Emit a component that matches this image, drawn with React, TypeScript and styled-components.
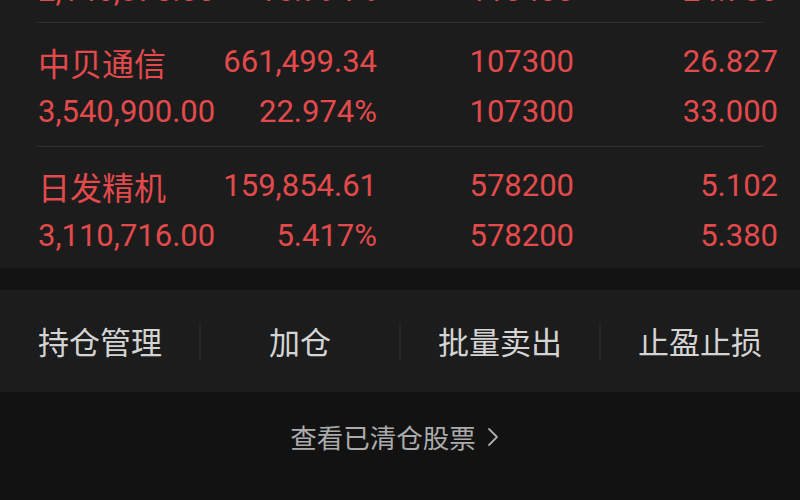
import React from "react";
import styled, { createGlobalStyle } from "styled-components";

const Global = createGlobalStyle`
  html, body { margin: 0; padding: 0; background: #121212; }
  body { width: 800px; height: 500px; overflow: hidden; }
`;

const Page = styled.div`
  width: 800px;
  height: 500px;
  overflow: hidden;
  display: flex;
  flex-direction: column;
  background: #121212;
`;

const List = styled.div`
  background: #1c1c1c;
  margin-top: -84px;
  display: flex;
  flex-direction: column;
`;

const Row = styled.div<{ $pt: number; $pb: number }>`
  display: grid;
  grid-template-columns: 180px 159px 197px 204px;
  padding: ${(p) => p.$pt}px 22px ${(p) => p.$pb}px 38px;
  color: #e34a4c;
`;

const Cell = styled.div<{ $cjk?: boolean; $left?: boolean }>`
  height: 50px;
  line-height: 50px;
  white-space: nowrap;
  text-align: ${(p) => (p.$left ? "left" : "right")};
  font-family: ${(p) =>
    p.$cjk
      ? `"Noto Sans CJK SC", "Noto Sans", sans-serif`
      : `Roboto, "Noto Sans", sans-serif`};
  font-size: ${(p) => (p.$cjk ? "32px" : "31px")};
`;

const Divider = styled.div`
  height: 1px;
  margin: 0 36px;
  background: #2e2e2e;
`;

const Gap = styled.div`
  height: 22px;
  background: #131313;
`;

const Toolbar = styled.div`
  height: 102px;
  background: #1c1c1c;
  display: grid;
  grid-template-columns: repeat(4, 1fr);
  align-items: center;
`;

const Action = styled.div<{ $sep?: boolean }>`
  position: relative;
  text-align: center;
  font-family: "Noto Sans CJK SC", "Noto Sans", sans-serif;
  font-size: 31px;
  line-height: 40px;
  color: #d4d4d4;
  &::before {
    content: "";
    display: ${(p) => (p.$sep ? "block" : "none")};
    position: absolute;
    left: -1px;
    top: 1px;
    width: 2px;
    height: 38px;
    background: #262626;
  }
`;

const Footer = styled.div`
  flex: 1;
  display: flex;
  justify-content: center;
  align-items: flex-start;
  padding-top: 30px;
`;

const Link = styled.div`
  display: flex;
  align-items: center;
  gap: 10px;
  font-family: "Noto Sans CJK SC", "Noto Sans", sans-serif;
  font-size: 26.5px;
  line-height: 30px;
  color: #ababab;
  padding-right: 10px;
`;

type Stock = [string, string, string, string, string, string, string, string];

const stocks: { data: Stock; pt: number; pb: number }[] = [
  {
    data: ["海能实业", "512,306.18", "110400", "21.760", "2,146,375.00", "16.794%", "110400", "24.700"],
    pt: 0,
    pb: 6,
  },
  {
    data: ["中贝通信", "661,499.34", "107300", "26.827", "3,540,900.00", "22.974%", "107300", "33.000"],
    pt: 14,
    pb: 9,
  },
  {
    data: ["日发精机", "159,854.61", "578200", "5.102", "3,110,716.00", "5.417%", "578200", "5.380"],
    pt: 14,
    pb: 7,
  },
];

const actions = ["持仓管理", "加仓", "批量卖出", "止盈止损"];

export default function App() {
  return (
    <Page>
      <Global />
      <List>
        {stocks.map((s, i) => (
          <React.Fragment key={i}>
            {i > 0 && <Divider />}
            <Row $pt={s.pt} $pb={s.pb}>
              <Cell $cjk $left>{s.data[0]}</Cell>
              <Cell>{s.data[1]}</Cell>
              <Cell>{s.data[2]}</Cell>
              <Cell>{s.data[3]}</Cell>
              <Cell $left>{s.data[4]}</Cell>
              <Cell>{s.data[5]}</Cell>
              <Cell>{s.data[6]}</Cell>
              <Cell>{s.data[7]}</Cell>
            </Row>
          </React.Fragment>
        ))}
      </List>
      <Gap />
      <Toolbar>
        {actions.map((a, i) => (
          <Action key={a} $sep={i > 0}>
            {a}
          </Action>
        ))}
      </Toolbar>
      <Footer>
        <Link>
          查看已清仓股票
          <svg width="14" height="22" viewBox="0 0 14 22" fill="none">
            <polyline
              points="3,3 11,11 3,19"
              stroke="#ababab"
              strokeWidth="1.8"
              strokeLinecap="round"
              strokeLinejoin="round"
            />
          </svg>
        </Link>
      </Footer>
    </Page>
  );
}
